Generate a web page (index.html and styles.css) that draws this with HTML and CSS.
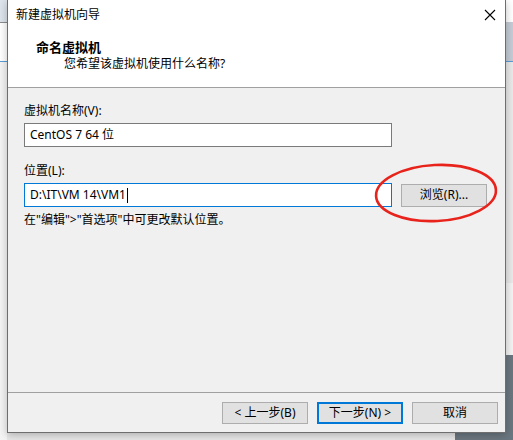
FILE: index.html
```html
<!DOCTYPE html>
<html lang="zh-CN">
<head>
    <meta charset="UTF-8">
    <title>新建虚拟机向导</title>
    <link rel="stylesheet" href="styles.css">
</head>
<body>
    <div class="dialog">
        <div class="titlebar">
            <span class="title">新建虚拟机向导</span>
            <svg class="close" width="12" height="12" viewBox="0 0 12 12">
                <path d="M1 1 L11 11 M11 1 L1 11" stroke="#000" stroke-width="1.1" fill="none"/>
            </svg>
        </div>

        <div class="header">
            <div class="header-title">命名虚拟机</div>
            <div class="header-sub">您希望该虚拟机使用什么名称?</div>
        </div>

        <div class="content">
            <div class="field">
                <label class="field-label">虚拟机名称(V):</label>
                <div class="textbox">CentOS 7 64 位</div>
            </div>

            <div class="field">
                <label class="field-label">位置(L):</label>
                <div class="field-row">
                    <div class="textbox focused">D:\IT\VM 14\VM1<span class="caret"></span></div>
                    <button class="btn browse">浏览(R)...</button>
                </div>
                <p class="hint">在"编辑">"首选项"中可更改默认位置。</p>
            </div>
        </div>

        <div class="footer">
            <button class="btn">&lt; 上一步(B)</button>
            <button class="btn default">下一步(N) &gt;</button>
            <button class="btn">取消</button>
        </div>

        <!-- hand-drawn annotation round the browse button -->
        <svg class="mark" width="130" height="66" viewBox="0 0 130 66">
            <ellipse cx="65" cy="33" rx="60" ry="28" transform="rotate(-3 65 33)" fill="none" stroke="#e8231c" stroke-width="2.6"/>
        </svg>
    </div>
</body>
</html>
```

FILE: styles.css
```css
:root {
    --face: #f0f0f0;
    --line: #a0a0a0;
    --accent: #0078d7;
    --btn-face: #e1e1e1;
    --btn-border: #adadad;
}
* {
    box-sizing: border-box;
}
body {
    margin: 0;
    width: 513px;
    height: 440px;
    overflow: hidden;
    font-family: "Noto Sans", "Noto Sans CJK SC", sans-serif;
    font-size: 12px;
    line-height: 16px;
    color: #000;
    background:
        linear-gradient(to bottom, #dde4eb 0 22px, #8c8c8c 22px 23px, #fff 23px 61px, #5b9bd5 61px 62px, #f4f4f4 62px) left top / 7px 100% no-repeat,
        linear-gradient(to bottom, #fff 0 22px, #c5ccd5 22px 61px, #5b9bd5 61px 62px, #e9e9e9 62px 283px, #f3f3f3 283px 355px, #6b7780 355px) right top / 8px 100% no-repeat,
        linear-gradient(to right, #e8e8e8 0 455px, #6b7780 455px);
}
.dialog {
    position: relative;
    margin-left: 7px;
    width: 499px;
    height: 433px;
    display: flex;
    flex-direction: column;
    background-color: var(--face);
    border: 1px solid #6e6e6e;
    border-top: none;
    box-shadow: 0 2px 8px rgba(0,0,0,0.25);
}
.titlebar {
    height: 30px;
    display: flex;
    align-items: center;
    justify-content: space-between;
    padding: 0 8px 0 8px;
    background-color: #fff;
}
.close {
    margin-right: 1px;
}
.header {
    height: 58px;
    padding: 9px 0 0 28px;
    background-color: #fff;
    border-bottom: 1px solid var(--line);
}
.header-title {
    font-size: 13px;
    font-weight: bold;
    line-height: 17px;
}
.header-sub {
    padding-left: 28px;
    line-height: 16px;
}
.content {
    flex: 1;
    padding: 15px 0 0 16px;
}
.field-label {
    display: block;
    margin-bottom: 4px;
}
.field + .field {
    margin-top: 16px;
}
.field-row {
    display: flex;
    align-items: center;
    gap: 9px;
}
.textbox {
    width: 368px;
    height: 24px;
    padding: 0 5px;
    display: flex;
    align-items: center;
    background-color: #fff;
    border: 1px solid #7a7a7a;
    font-size: 12px;
}
.textbox.focused {
    border-color: var(--accent);
}
.caret {
    display: inline-block;
    width: 1px;
    height: 15px;
    margin-left: 1px;
    background-color: #000;
}
.hint {
    margin: 5px 0 0;
}
.btn {
    width: 86px;
    height: 22px;
    padding: 0;
    font-family: inherit;
    font-size: 12px;
    line-height: 16px;
    color: #000;
    background-color: var(--btn-face);
    border: 1px solid var(--btn-border);
}
.btn.default {
    border: 2px solid var(--accent);
}
.browse {
    height: 23px;
}
.footer {
    height: 40px;
    display: flex;
    justify-content: flex-end;
    gap: 9px;
    padding: 9px 7px 0 0;
    border-top: 1px solid var(--line);
}
.mark {
    position: absolute;
    left: 363px;
    top: 160px;
}
```
